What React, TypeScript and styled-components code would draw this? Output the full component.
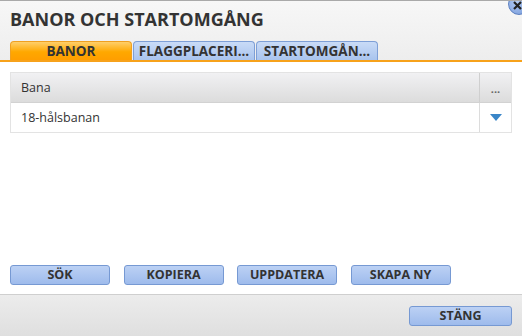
import React from 'react';
import styled, { createGlobalStyle } from 'styled-components';

const GlobalStyle = createGlobalStyle`
  html, body {
    margin: 0;
    padding: 0;
    background: #fff;
  }
  body {
    font-family: 'Open Sans', 'Liberation Sans', sans-serif;
    color: #333;
  }
`;

const tabs = ['BANOR', 'FLAGGPLACERI...', 'STARTOMGÅN...'];
const actions = ['SÖK', 'KOPIERA', 'UPPDATERA', 'SKAPA NY'];

export default function App() {
  return (
    <>
      <GlobalStyle />
      <Dialog>
        <Header>
          <Title>BANOR OCH STARTOMGÅNG</Title>
          <CloseButton>
            <svg width="9" height="9" viewBox="0 0 9 9">
              <path d="M1 1 L8 8 M8 1 L1 8" stroke="#222" strokeWidth="2.2" />
            </svg>
          </CloseButton>
          <TabBar>
            {tabs.map((t, i) => (
              <Tab key={t} active={i === 0}>
                {t}
              </Tab>
            ))}
          </TabBar>
        </Header>
        <Body>
          <Table>
            <HeadRow>
              <HeadCell>Bana</HeadCell>
              <MenuCell>...</MenuCell>
            </HeadRow>
            <Row>
              <Cell>18-hålsbanan</Cell>
              <ArrowCell>
                <svg width="12" height="7" viewBox="0 0 12 7">
                  <path d="M0 0 H12 L6 7 Z" fill="#3a86c8" />
                </svg>
              </ArrowCell>
            </Row>
          </Table>
          <ButtonRow>
            {actions.map((a) => (
              <Button key={a}>{a}</Button>
            ))}
          </ButtonRow>
        </Body>
        <Footer>
          <Button>STÄNG</Button>
        </Footer>
      </Dialog>
    </>
  );
}

const Dialog = styled.div`
  position: relative;
  width: 522px;
  height: 336px;
  box-sizing: border-box;
  border-top: 1px solid #a9a9a9;
  display: flex;
  flex-direction: column;
  overflow: hidden;
`;

const Header = styled.div`
  background: linear-gradient(#f7f7f7, #ededed);
  padding: 8px 0 0;
`;

const Title = styled.h1`
  margin: 0 0 0 10px;
  font-size: 18px;
  line-height: 21px;
  font-weight: 700;
  color: #333;
`;

const CloseButton = styled.span`
  position: absolute;
  top: -8px;
  right: -8px;
  width: 22px;
  height: 22px;
  border-radius: 50%;
  background: radial-gradient(circle at 40% 40%, #b3cbf3, #7397d8);
  border: 1px solid #5b7fc0;
  display: flex;
  align-items: flex-end;
  justify-content: flex-start;
  padding: 0 0 4px 4px;
  box-sizing: border-box;
`;

const TabBar = styled.div`
  display: flex;
  gap: 1px;
  padding: 11px 0 0 10px;
  border-bottom: 2px solid #f7a21b;
`;

const Tab = styled.div<{ active?: boolean }>`
  width: 122px;
  height: 19px;
  box-sizing: border-box;
  border: 1px solid ${(p) => (p.active ? '#f0a020' : '#7e9fd6')};
  border-bottom: none;
  border-radius: 4px 4px 0 0;
  background: ${(p) =>
    p.active
      ? 'linear-gradient(#ffcf6a, #ffa800 55%, #ff9e00)'
      : 'linear-gradient(#c9dbf7, #a9c4ee)'};
  font-size: 13.5px;
  font-weight: 700;
  line-height: 18px;
  text-align: center;
  color: #333;
  white-space: nowrap;
  overflow: hidden;
`;

const Body = styled.div`
  flex: 1;
  background: #fff;
  padding: 10px 10px 9px;
  display: flex;
  flex-direction: column;
  justify-content: space-between;
`;

const Table = styled.div`
  border: 1px solid #e3e3e3;
`;

const HeadRow = styled.div`
  display: flex;
  height: 29px;
  background: linear-gradient(#f1f1f3, #dcdcdc);
  border-bottom: 1px solid #d2d2d2;
`;

const Row = styled.div`
  display: flex;
  height: 29px;
  background: #fff;
`;

const HeadCell = styled.div`
  flex: 1;
  padding-left: 10px;
  font-size: 12.5px;
  line-height: 29px;
  color: #333;
`;

const Cell = styled(HeadCell)``;

const MenuCell = styled.div`
  width: 31px;
  border-left: 1px solid #cfcfcf;
  text-align: center;
  font-size: 11px;
  font-weight: 700;
  line-height: 32px;
  color: #666;
`;

const ArrowCell = styled.div`
  width: 31px;
  border-left: 1px solid #dcdcdc;
  display: flex;
  align-items: center;
  justify-content: center;
`;

const ButtonRow = styled.div`
  display: flex;
  gap: 13.5px;
`;

const Button = styled.button`
  width: 100px;
  height: 20px;
  padding: 0;
  box-sizing: border-box;
  border: 1px solid #7699d3;
  border-radius: 3px;
  background: linear-gradient(#bcd1f4, #9ebbec);
  font-family: 'Open Sans', 'Liberation Sans', sans-serif;
  font-size: 12.5px;
  font-weight: 700;
  color: #333;
  line-height: 18px;
`;

const Footer = styled.div`
  height: 41px;
  border-top: 1px solid #cfcfcf;
  background: linear-gradient(#ececec, #dfdfdf);
  display: flex;
  justify-content: flex-end;
  align-items: center;
  padding-right: 10px;
  ${Button} {
    width: 103px;
  }
`;
